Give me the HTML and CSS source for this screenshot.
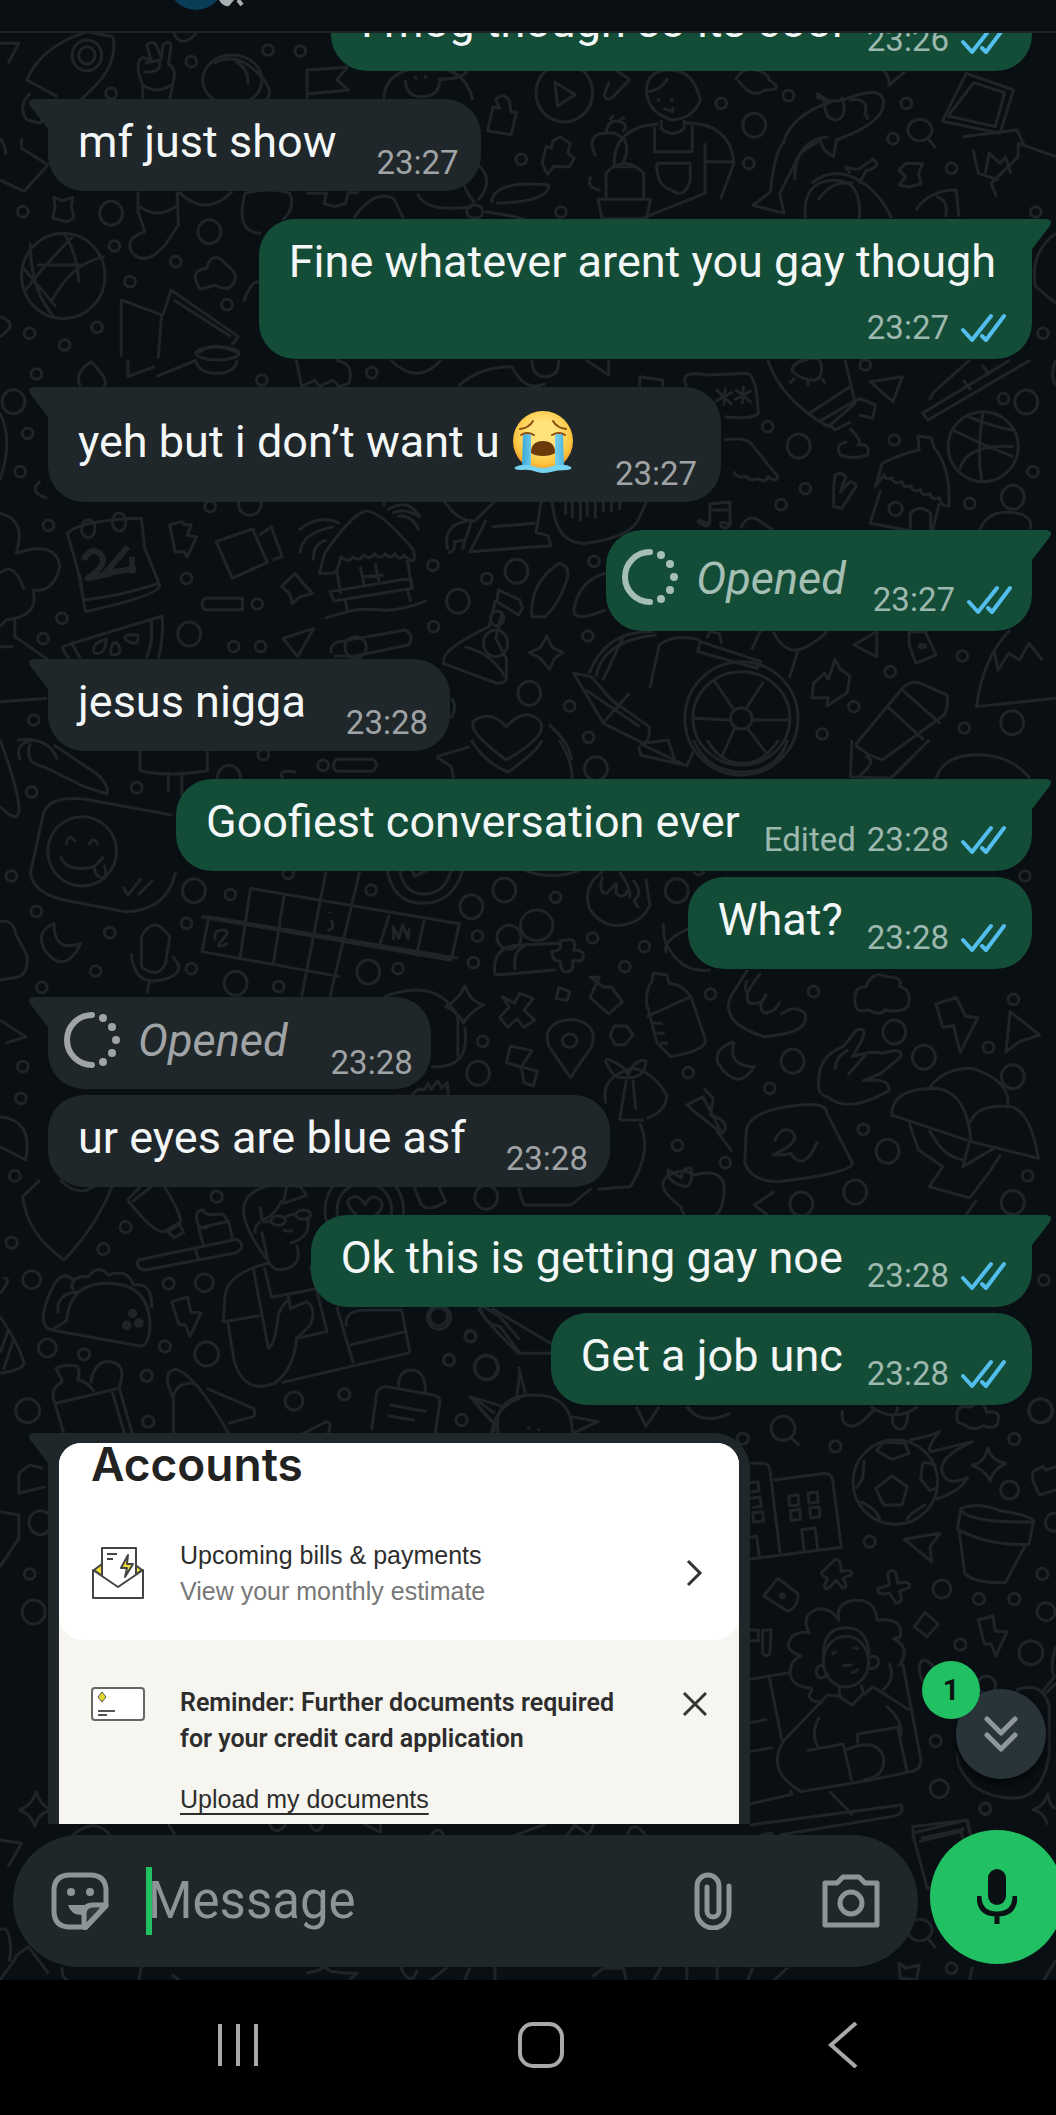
FILE: index.html
```html
<!DOCTYPE html>
<html lang="en">
<head>
<meta charset="utf-8">
<meta name="viewport" content="width=device-width, initial-scale=1">
<title>Chat</title>
<link rel="stylesheet" href="styles.css">
</head>
<body>
<svg class="defs" aria-hidden="true">
  <defs>
    <symbol id="ticks" viewBox="0 0 46 30"><path d="M3 17l9 10L31 3M22 23l4 4L44 3" fill="none" stroke="#53bdeb" stroke-width="4" stroke-linecap="round" stroke-linejoin="round"/></symbol>
    <symbol id="opened" viewBox="0 0 58 58"><path d="M30 4a25 25 0 0 0 0 50" fill="none" stroke="currentColor" stroke-width="6" stroke-linecap="round"/><g fill="currentColor"><circle cx="41" cy="7" r="4"/><circle cx="50" cy="16" r="4"/><circle cx="54" cy="29" r="4"/><circle cx="50" cy="42" r="4"/><circle cx="41" cy="51" r="4"/></g></symbol>
    <symbol id="tail" viewBox="0 0 30 32"><path d="M0 0H14Q22 1 17 8L0 30Z" fill="currentColor"/></symbol>
    <ellipse id="s" rx="8" ry="16"/><ellipse id="m" rx="17" ry="36"/>
    <circle id="c" r="17"/><circle id="d" r="27"/><circle id="e" r="36"/>
  </defs>
</svg>

<header class="topbar">
  <svg class="avatar" width="54" height="10" viewBox="0 0 54 10" aria-hidden="true"><circle cx="20" cy="-18" r="28" fill="#0b3d59"/><path d="M43 0q4 7 10 6l5-6" fill="#a9b0b3"/><path d="M62 0l4 5" stroke="#a9b0b3" stroke-width="4"/></svg>
</header>

<main class="chat">
  <svg class="wallpaper" viewBox="0 33 1056 1947" preserveAspectRatio="xMidYMin slice" aria-hidden="true">
    <g transform="scale(.6734 .3333)">
      <path d="M0 130h28l-16 60M85 290L40 240Q60 140 130 95L168 110Q175 190 140 260L120 300M45 280q-20 40-5 80l20 10 10-50"/>
      <ellipse cx="129" cy="166" rx="22" ry="46"/><ellipse cx="129" cy="166" rx="12" ry="26"/>
      <path d="M225 185L218 135q8-16 14 0l8 40 2-40q10-18 12 4l-4 54q12 10 8 45l-10 100M212 300V255Q198 190 212 172l14 10M215 190l22-10q5 40-24 36M212 255q20 30 42 0"/>
      <ellipse cx="345" cy="240" rx="44" ry="75"/><path d="M318 190q35-40 70 40t-30 90M350 185q20 20 18 70"/>
      <path d="M456 296v-86l60-8-16 38 18 30-62 12M258 99q10 50 34 0"/>
      <path d="M570 300q0-90 60-98t72 98M602 240q0 50 25 50t26-50M617 228v10M632 226v10M650 238q40 0 44-28"/>
      <ellipse cx="838" cy="278" rx="42" ry="88"/><path d="M824 246l30 38-26 34zM742 325l-6-25q10-26 20 0l3 36 8 0-8 68-35-12 8-70z"/>
      <path d="M905 245l-8 40q4 20 12 8l26-54-24-35M960 275q0-65 35-65t45 90q-10 55-42 60-35-20-38-85q20 0 32-40M976 296l4 8M995 296l5 8M985 325l14 10v-14M982 360v25q16 30 34 0v-25M978 372Q910 380 912 500h30M1018 368q66 0 72 120l-20 110M1045 485h45M972 380v75h56v-80M975 490h50v50q-8 60-28 30-22-10-22-80M1047 430v150l-95 76"/>
      <path d="M900 598V520q26-60 56 0v78M888 598h78l-6 58h-66zM885 470q-20-80 28-70 28 20 12 90M900 395q4-40 20-30t4 30M905 360l6-14M920 360l8-8M878 530q-10 30 14 42"/>
      <path d="M1092 240q10-40 30-30t20 30q25 30-6 30-20 30-40-30M1205 550q30-50 65-15t54 120M1196 656q-5-110 40-115t40 115M1215 600q20-60 52-50M1262 520l-6-20q10 10 20 6l20-28q16 20-10 34l-10 40"/>
      <path d="M1212 290q20 20 40 10 60-50 60 10 0 60-70 110l-4 50-14-20-6-30-30 40-30 120 6 60-46-24 26-40q6-120 20-150 10-80 70-120l-22-26M1250 290q10 60-8 70-18 0-18-60M1262 300q30-10 22 50 M1288 345v14M1230 410q-50 10-50 130"/>
      <path d="M1345 490l-10 20 10 20-10 25 15 6 18-10-4-30 6-30zM1435 220l70 50-20 130-86-36zM1446 248l46 30-14 102-70-32zM1430 410l80-20 12 50M1445 450l8 70 30 20M1463 520l6-60 16 30 8-20 8 50M1480 590l-8-40 40-80V430l56 40"/>
      <ellipse cx="1366" cy="390" rx="18" ry="32"/><path d="M1378 415l12 30M1312 212q10 20 8 45 10-20 24-42M1360 630q20-60 60-60l4 80M1390 590q20 10 14 60M0 415q10 30 8 50M0 540l36 34 35-80L32 445v-30"/>
      <path d="M205 575v60l10 60q-30 20-20 60 20 50 50-20l20-60-2-100M208 620q26 40 56-4M265 575q40 80 80 0M388 700q-40 0-24-120 40-20 66 0 10 40-10 80M455 580h30l-4 30 16 10 16-10 4-32h16M525 656q30-90 60-60l14 60M620 580q10 60 80 40M705 610Q670 520 700 480q40 50 10 120M730 610q0-70 85-55 2 50-78 55M720 635q40 10 60 25"/>
      <ellipse cx="705" cy="635" rx="12" ry="20"/>
      <path d="M80 592l12 10 16-10-2 30 4 30-10 14-22-12 4-30z"/><ellipse cx="94" cy="828" rx="62" ry="128"/><path d="M45 730q0 140 35 220M95 700q20 60 22 150M38 870q30-80 70-160M75 910q30-120 80-140M33 800l50 120M55 795l70 0"/>
      <path d="M295 860q-14-50 12-55 8-60 30-10 20 30 8 60-8 20-26 0-24 20-24 5zM180 1070V900l60 45-5 130M242 945l12-75 100 140-10 25M258 900l85 110M362 905q10-60 22-60M295 1060q20-40 60 0M0 950q30 20 0 60"/><ellipse cx="323" cy="1060" rx="32" ry="20"/>
      <use href="#s" x="398" y="150"/><use href="#s" x="446" y="153"/><use href="#s" x="284" y="185"/><use href="#s" x="165" y="280"/><use href="#s" x="1071" y="310"/><use href="#s" x="1171" y="287"/><use href="#s" x="1346" y="310"/><use href="#m" x="1120" y="376"/><use href="#s" x="1326" y="416"/><use href="#s" x="774" y="478"/><use href="#s" x="1112" y="490"/><use href="#s" x="1413" y="505"/><use href="#s" x="833" y="636"/><use href="#s" x="34" y="635"/><use href="#m" x="165" y="640"/><use href="#m" x="311" y="695"/><use href="#s" x="170" y="738"/><use href="#s" x="261" y="785"/><use href="#s" x="193" y="845"/><use href="#s" x="337" y="914"/><use href="#s" x="44" y="1000"/><use href="#s" x="144" y="982"/><use href="#s" x="96" y="1035"/><use href="#s" x="1549" y="1000"/><use href="#s" x="1538" y="636"/>
      <path d="M805 490l6-50 8 4 2-20 10-14 16 20-4 30 10 15-8 26-22-2-10 24zM1568 700q-40 60-30 160l30 50"/>
    </g>
    <g transform="translate(0 360) scale(.6734 .3333)">
      <path d="M120 80q-12-40 15-75 30 60 18 75M190 0v50l40-30M232 50l60-50M290 0q5 40 32 40t30-40M440 0l8 80 20-20 6 20 20-20 10 20 14-10q10-60-20-70M580 0q40 80 75 0M680 80q30-60 80-60 20 80 50 50M790 0q0 50 20 50t20-50M870 0l34 45V0M950 80v-30l34 10v20M1020 80q-14-50 30-35l60-5q14 10 16 120-10 20-50 10M1063 88l24 46M1077 82l-2 55M1088 96l-26 28M1092 88l24 40M1104 78l-2 55M1116 92l-26 28"/>
      <path d="M1140 0q20 120 90 200L1270 130 1255 0M1202 160l60-80M1216 185l60-70 24 20-4 40-20-10M1230 190l10 20 24-25M1190 5q30-30 30 20t-26 30-14-40 24-20M1200 60v20M1180 55l-8 15M1220 55l6 15M1292 65l48-15-14 75zM1500 0l-130 160 8 20L1530 0M1380 120l6-22L1440 0M1430 60l12 30M1458 15l12 30"/>
      <ellipse cx="1460" cy="260" rx="52" ry="105"/><path d="M1415 210q50 50 90 80M1460 155q-10 120-2 210M1438 170q50 40 68 40M1425 330q10-80 80-70M1568 0q-10 50 0 75M0 160q20 80 0 200"/>
      <path d="M1262 205q20 40 12 50 20-4 14 30-20 15-40 0-10-30 10-40M1240 345q10-10 16 5l-8 45 14-30q16 5 4 30l-16 50-12-5v-60zM1300 380L1310 310Q1340 280 1365 270l-2-42 20 5 4 30q25 60 22 175-12 0-14-25-12 10-14-12-12 10-14-12-12 10-14-12-12 10-14-12-12 10-14-12-12 10-12-10zM1308 390l-16 100 60 22V460q14-30 30 0v70M1395 430l-10 80"/>
      <ellipse cx="1330" cy="447" rx="10" ry="20"/><path d="M1455 512q10-60 45-55t30 50M1075 240q30-10 40 10l40 100q-2 20-14 0-4 20-16 6-12 10-16-8-14 10-20-14M1051 492q-20-20-12-2 15 20 15-10V432l30-6v70q-14-18-14 0 10 20 14-10M1054 450h28M1100 505q10-50 30-20t16 20"/>
      <path d="M660 425q20 60 45 58l30 -60M665 570q-10-80 36-90M665 575q10 10 10-30l15-5-2 25M700 485l-14 85M722 480l-24 95 120-18-4-30-18-10 8-95M730 500l65-10M820 425q5 130 50 125 70-20 80-80l10-46M840 425v40M850 425v50M862 425v60M872 425v45M884 425v50M896 425v30M908 425v30M920 425v25"/>
      <path d="M100 520q20-40 110-45l5 90 22 110q2 30-110 80l-12-130zM118 640l6 80q50-10 112-50M270 485l-18 10 8 80 14 0 4 16 14-60-14-5 6-32-10 0zM345 655l-24-110 54-38 22 100zM385 525l18-25 16 90-14 10M0 460q40 20 24 120 60-40 65 40-10 80-40 70 10 80-40 90L0 800M0 640q20-40 36 50M70 415q-30-20-10-50M22 780v50l50 70M0 860h20"/>
      <ellipse cx="131" cy="506" rx="10" ry="27"/><ellipse cx="177" cy="486" rx="10" ry="27"/><path d="M124 600q10-40 24-20 16 30-18 75l36-15M190 560l-34 80 46-14M196 590v50" stroke-width="6"/>
      <path d="M474 640L482 580Q520 470 540 455T614 570q4 40-4 30-10-10-10-15-6 20-14-4-6 20-14 0-6 20-16 0-6 20-16 5-6 20-16 5-6 20-18 0-4 45-12 49zM500 632l6 70M605 600l6 80M535 620l6 60M557 610l6 55M540 650l30-5M490 695l120-40 2 30-116 38zM512 720l4 30M605 690l5 35M482 775q30-20 46-25t40 0 66-28M446 580q0-60 50-80M444 510q30-50 60-20M465 600q0-50 20-60M570 440q0-40 15-20M575 450q30-40 48 20-24-30-40-10M590 470q20-10 32 40"/>
      <path d="M438 640l-20 40 12 20 4 30 12-20 18-10-14-30zM304 715h56v34h-56q-8-15 0-34M790 770q-4-100 40-160 20 10 10 60-10 60-30 100zM900 640q-40 20-48 110 0 40 48 0M92 860l149-92q2 70-6 128M92 860q4 20 10 36M106 845q6 30 14 50M225 780v60q-4 40-8 54M140 880q-6-30 18-42-2 50-18 42M165 885q-2-36 8-38 14 40-8 38M185 838q0-18 20-12 2 40-20 12"/>
      <path d="M466 805l-46 30 22 55zM492 880q-4-35 20-38l90-32q15 20 4 45l-80 34-30 0M740 690l32 30 4 25-6 20-12-15-20-25zM736 720l-10 80q-60 60-66 90l-2 20 80 60q14 0 14-15v-60l-16-60 10-80M690 860q40 20 60 90"/><ellipse cx="528" cy="862" rx="16" ry="32"/><ellipse cx="738" cy="775" rx="10" ry="22"/><ellipse cx="736" cy="850" rx="18" ry="40"/>
      <path d="M812 828l-10 36-16 14 16 16 14 34 8-34 12-16-16-16zM875 940Q900 810 970 815M885 950q10-110 90-125M895 960q20-80 30-130M965 985l14-130Q1000 820 1040 840M1040 845l90 60-6 20-88-50zM1050 835l4-20 14 6 4 30M852 940l44 150 60 60q10-10 8-50l-56-80-30-70zM956 1150l36-10 10 60M870 990l80 110M895 1090l40-90"/>
      <ellipse cx="1101" cy="1075" rx="84" ry="170"/><ellipse cx="1101" cy="1075" rx="72" ry="140"/><ellipse cx="1101" cy="1075" rx="16" ry="32"/><path d="M1090 1050l-30-90M1108 1045l26-80M1085 1080l-55-5M1117 1080l55 0M1092 1100l-20 90M1110 1105l30 80M1130 810l-14 60M1148 815q20 80 50 45t30-50M1186 865l-14 90"/>
      <path d="M1268 855l34-40v75zM1350 815l24 0 16 70-30 25-10-55zM1208 970l16-30 6 18 10-60 8 30 14 20-4 50-30 40 2-25-24 0zM1500 810q-40 80-50 230L1568 1015M1476 870l6 60 16-50 16 20 14-50 20 50M1270 1155l70-170q15-30 32-10l34 30q4 30-4 60L1310 1200M1340 990l56 100M1318 1040l54 100M1270 1155l20 30 20 15"/><circle cx="1370" cy="858" r="5"/>
      <path d="M752 1200Q690 1110 705 1080 730 1050 752 1100 780 1040 800 1080T752 1200M815 1095q30 50 34 105M670 1015q10 20 0 60M0 1025l70-10M25 1140q50-10 60 60M30 1200q-10-50 20-60"/>
      <use href="#s" x="54" y="42"/><use href="#m" x="20" y="125"/><use href="#s" x="389" y="60"/><use href="#s" x="552" y="38"/><use href="#s" x="1285" y="15"/><use href="#s" x="1490" y="116"/><use href="#m" x="1524" y="126"/><use href="#s" x="1140" y="200"/><use href="#m" x="1186" y="258"/><use href="#s" x="1328" y="240"/><use href="#s" x="1534" y="335"/><use href="#s" x="1196" y="386"/><use href="#s" x="1160" y="434"/><use href="#m" x="1504" y="412"/><use href="#s" x="1440" y="430"/><use href="#s" x="30" y="335"/><use href="#s" x="41" y="220"/><use href="#s" x="312" y="440"/><use href="#m" x="371" y="430"/><use href="#s" x="72" y="496"/><use href="#s" x="277" y="655"/><use href="#s" x="382" y="732"/><use href="#s" x="643" y="616"/><use href="#s" x="723" y="656"/><use href="#m" x="767" y="634"/><use href="#s" x="882" y="604"/><use href="#m" x="680" y="724"/><use href="#s" x="92" y="775"/><use href="#s" x="64" y="836"/><use href="#m" x="281" y="822"/><use href="#s" x="347" y="860"/><use href="#s" x="387" y="860"/><use href="#s" x="644" y="800"/><use href="#s" x="873" y="828"/><use href="#m" x="786" y="1000"/><use href="#s" x="846" y="1038"/><use href="#s" x="874" y="1132"/><use href="#s" x="1268" y="1040"/><use href="#s" x="1322" y="935"/><use href="#s" x="1429" y="888"/><use href="#s" x="1432" y="1104"/><use href="#m" x="1503" y="1088"/><use href="#s" x="1221" y="1122"/><use href="#s" x="50" y="1080"/>
    </g>
    <g transform="translate(0 740) scale(.6734 .3333)">
      <path d="M45 10q-10 60 20 70l60 60 34 22q4-40-30-80L80 15M208 32v60q40 20 100 0V32M250 95v60M270 95v70M500 58h54q10 15 0 36h-54q-10-15 0-36M648 50l50-30M648 50l22 30 4 36M700 0q20 70 55 96Q800 30 805 0M830 0q20 60 20 116M950 10l70 68 10-45M948 20l4 26 66 30M1030 0q20 96 72 96T1170 0M1050 0q20 70 52 70t54-70M1265 0l-2 110 60 5L1380 0M1275 110q30-50 10-60M1390 116q10-70 60-72t80 72M420 116q-10-30 20-20"/>
      <path d="M255 225l-130-48q-50-10-60 40L45 400q5 60 50 80l90 35q50 0 70-80l6-40"/><ellipse cx="122" cy="334" rx="51" ry="104"/><path d="M98 315q4-40 14-10M132 315q6-30 14 0M90 350q10 50 50 30l14-30M140 380q0 30 14 35 6-20 0-40M182 440l8 25 20-50M205 465l22-45M0 200q30 60 28 0T0 0"/>
      <path d="M372 445l310 106-12 110-370-130 10 0M310 530l-10 105 205 75M310 530l370 125M372 445l-16 215M422 465l-16 205M484 395L448 770M534 395L490 770M578 525l-14 90M630 540l-12 110M320 600q-4-30 10-30t0 30 8 10M490 515v4M492 540q6 30-6 30M584 600v-40l8 35 6-40 8 40 2-30"/>
      <path d="M575 392q10 100 54 98t58-98M594 392q6 70 36 70t40-70M612 392l4 16 18-16M780 392q40 30 80 0M895 395q-30 40-20 110 20 60 50 50t40-60l-6-80M895 410q-8 50 6 50l14-30v30q10 20 18-10M920 395q20 60 14 80M940 420q16 40 2 60l6 25M1030 395q5 20 16 0"/>
      <ellipse cx="797" cy="556" rx="24" ry="46"/><ellipse cx="756" cy="592" rx="18" ry="36"/><path d="M735 705q-6-90 40-90l56-5M735 705l90-15M765 690q-4-60 14-70M842 600q16-4 10 30 20 0 12 32l-14 0q4 36-12 34-6-10-6-32-14 0-12-30 16 0 12-30z"/>
      <path d="M82 550q-30 20-16 80 30 80 54-20-40 30-40-60M210 680V590q18-70 42 0l-6 80q-12 50-36 10M195 640q4 100 45 80t16-70M222 725l-4 35M0 545q20-10 24 40l16 60q4 70-24 70L0 720M985 550q0 60 10 80 20 70 60 60M1030 560q-50 40-40 80"/>
      <path d="M690 735q8 50 28 60-20 20-30 55-6-30-26-50 24-30 28-65M570 770q80-60 110 60v120M640 980q60 10 50-120M746 770l18 20 8-30 20 16-14 34 16 30-16 22-10-26-14 26-12-30 14-30zM830 742l16 14-4 26-16-6zM890 712l-14 60 28 50 20-36-16-45-12 0-20-30zM960 790q0-50 8-64l2-26 20 4 4 26q20 5 32 40l20 120q10 40-50 60l-20-40zM960 830l66-60M970 850h14M975 880h12M980 910h12"/>
      <path d="M1110 690l-25 80q-16 80 50 120 70-10 60-70-16-30-36 5M1110 760q-6-20 0-40M1130 700q-30 70-16 90 20 5 24-30M1138 760q-16 50 0 60 16-10 20-35M1270 790q-4-50 16-50 10-50 30-30 26 0 20 30 20 10 12 60-10 20-34 10-8 20-24 0-20 10-20-20zM1420 772l-30 20 10 70 16-5 10 80 26-104-18-4zM1500 815l-6 120 20-30 30-20zM848 838q-45 10-33 80l32 95 32-95q10-70-31-80"/><ellipse cx="846" cy="902" rx="11" ry="20"/><path d="M912 858h18l10 26-12 30h-14l-8-26zM758 918l32 14-16 50-22-14zM774 980l24 14-6 44-14-10zM1090 905q-30 20-24 65 30 90 54 10-40 0-30-75"/>
      <path d="M1216 1040q-4-90 36-120l20-50q16-10 8 30l-14 50q30-20 44-10 30-20 28 10l-30 50-26 22q40-10 38 30-60 70-90 20-16-10-14-32M1240 990q0-40 20-60M1285 945l-26 60M1108 1180q0-60 60-80 60-20 60 20l38 150q-2 30-110 55-40 0-50-55zM1150 1205q10-50 26-30 16 30-28 70 20 0 26-5 20 60 40-35M1045 1045l14 30-4 50q30 20 20 50l-10 0 22 60M1072 1180l-44-70-8-15 24-24z"/>
      <path d="M1324 1125q0-80 66-80 46 10 52 160zM1350 1150l14 80 36 50-20 60 60 34 30-80 16-50M1380 1045q20-60 64-60 60 40 52 120M1440 1150q10-60 60-50 30 10 42 155l-100-50M1380 1170q20 80 50 90M1440 1200l-10 80 50-60M900 1090q-10-80 40-105 30 10 50 80 0 50-30 70M905 985q-14-40 6-20 20 20 22 40 10-50 26-42 0 50-26 50-22 5-28-28M930 1020l-10 120M940 1020l4 90M920 1140h36M950 1150q20 80-14 190l-48 8"/>
      <path d="M0 840l38 50-30 20M0 1130q50 10 38 130L0 1220M610 1070q10-30 20-20l6-20 4 18 10-26 6 22 8-16 2 40M1025 1440q-10-10-14-40-40-60-20-90 20-30 40-5 40-20 44 30 2 80-20 105M1020 1340q-30-10-28-50 10 10 20 24 0-30 14-30 4 40-6 56M770 1345l8 50 70 0 30-50M1140 1425l-20-30 30-40M1430 1440l20-60"/>
      <use href="#s" x="391" y="44"/><use href="#s" x="480" y="76"/><use href="#m" x="340" y="112"/><use href="#s" x="203" y="143"/><use href="#m" x="885" y="86"/><use href="#s" x="47" y="156"/><use href="#s" x="17" y="408"/><use href="#s" x="428" y="400"/><use href="#m" x="288" y="452"/><use href="#s" x="342" y="464"/><use href="#s" x="551" y="450"/><use href="#m" x="749" y="450"/><use href="#s" x="54" y="514"/><use href="#s" x="825" y="472"/><use href="#m" x="1005" y="452"/><use href="#s" x="277" y="550"/><use href="#s" x="163" y="578"/><use href="#s" x="709" y="588"/><use href="#s" x="880" y="594"/><use href="#s" x="957" y="620"/><use href="#m" x="700" y="500"/><use href="#s" x="142" y="693"/><use href="#s" x="284" y="686"/><use href="#m" x="547" y="696"/><use href="#s" x="591" y="686"/><use href="#s" x="703" y="668"/><use href="#s" x="928" y="680"/><use href="#m" x="350" y="730"/><use href="#s" x="414" y="740"/><use href="#s" x="62" y="742"/><use href="#s" x="1055" y="762"/><use href="#s" x="1208" y="755"/><use href="#s" x="1505" y="778"/><use href="#m" x="1328" y="876"/><use href="#s" x="717" y="904"/><use href="#s" x="1468" y="922"/><use href="#m" x="1177" y="964"/><use href="#m" x="1372" y="952"/><use href="#s" x="1022" y="998"/><use href="#m" x="710" y="1000"/><use href="#s" x="1143" y="1045"/><use href="#m" x="1504" y="1010"/><use href="#s" x="34" y="980"/><use href="#s" x="31" y="1075"/><use href="#s" x="1282" y="1168"/><use href="#s" x="1006" y="1216"/><use href="#m" x="1318" y="1234"/><use href="#s" x="1077" y="1268"/><use href="#s" x="22" y="1308"/><use href="#m" x="1270" y="1356"/><use href="#m" x="722" y="1372"/><use href="#m" x="1190" y="1392"/><use href="#s" x="1522" y="408"/><use href="#s" x="1526" y="1308"/><use href="#m" x="1504" y="1388"/>
    </g>
    <g transform="translate(0 1180) scale(.3333)">
      <path d="M340 10Q290 140 192 240 80 160 68 50L120 0M180 0q60 60 110 10M382 60L440 0M382 60q80 100 110 95l50-30Q540 90 480 0M397 65l70-55M503 155l36-22 12 24-28 16zM597 140q-20-50 12-50 6 20 50 12 20 0 24 28M597 140q20 10 32-5M610 195l-14-50 90-22 12 55M415 240l295-62q30 20 0 40l-275 52q-30-5-20-30M585 208l12 32M798 235Q700 100 745 50T900 20l20 26-70 24 10-50M780 80q5 20 5 40 40-10 60-60M788 125l26 0M855 110l35-10M850 150q16 8 28 0M920 110q20 60-50 80M768 160q-10-20 14-35M785 155l20 90q20 40 70 15 30-20 15-65M805 250Q680 280 675 350l-5 75 110-18M683 425l20 120q30 100 120 65 60-40 67-140M760 265l45 240q20-10 30-100 10-30 30-45M793 262l22 90 130-25M865 345l6 40 50-20q30 20 10 70l-40 40 90-20-50-200M845 608l385-90M1010 380l50 170M1040 440q-10-50 60-50t105 0l25 128M1050 495l165-40"/>
      <ellipse cx="835" cy="122" rx="22" ry="14"/><ellipse cx="910" cy="104" rx="22" ry="14"/>
      <path d="M155 450q50-30 45-30 10-110 120-110 130 0 130 130-5 60-30 58L155 450Q110 440 145 350t75-50q-5 20 0 30M215 325q0-40 50-35 30-40 60-5 60-20 75 30 50-10 55 50v20M175 400q-10-60 60-65M0 410q60 90 72 140-5 20-72 30M0 520l25-70M10 570l30-90M0 340q40-50 10-45M515 365l48-14 10 45 30 3-33 70-15-35-18 0zM188 605l-20-40q30-15 65-5l5 20-5 20q30 5 50 35M188 605q-40 20-25 60l30 100M168 670l190-45 40 140M335 630l40 135M272 610q10-70 60-65t25 80M520 770V655Q480 570 530 568q60 20 160 200M518 655q10-50 65-45M620 625l140 60q10 15 0 25l-75 20M900 765l80-40q20 0 0 45M1195 620q0-50 40-50t42 65M1130 640q5-20 30-20l140 25q20 5 20 20l-15 100M1130 640l-15 110M1170 675l110 20M1162 707l82 14M1475 725l-65-75 100 30M1475 760q10-80 85-105M1550 650l10-70M1242 20l20 50q20 30 75-5l-20-45M1440 380q10 50 60 60l60 80M1450 380l50 30 60 70"/>
      <circle cx="1093" cy="90" r="82"/><circle cx="1093" cy="90" r="118"/><path d="M1095 130q-70-60-45-75 30-15 45 20 20-40 45-15t-45 70"/>
      <g class="dots"><circle cx="398" cy="400" r="10"/><circle cx="380" cy="436" r="10"/><circle cx="417" cy="429" r="10"/></g>
      <use href="#c" x="650" y="50"/><use href="#c" x="35" y="188"/><use href="#c" x="377" y="141"/><use href="#c" x="310" y="207"/><use href="#d" x="95" y="299"/><use href="#c" x="506" y="311"/><use href="#d" x="613" y="308"/><use href="#d" x="142" y="504"/><use href="#c" x="252" y="523"/><use href="#c" x="495" y="499"/><use href="#e" x="620" y="522"/><use href="#c" x="440" y="587"/><use href="#d" x="882" y="663"/><use href="#c" x="1033" y="643"/><use href="#e" x="83" y="692"/><use href="#c" x="445" y="725"/><use href="#d" x="1316" y="410"/><use href="#c" x="1411" y="468"/><use href="#c" x="1347" y="540"/><use href="#e" x="1460" y="563"/><use href="#c" x="1385" y="720"/>
    </g>
    <g transform="translate(736 1400) scale(.3333)">
      <circle cx="141" cy="85" r="36"/><path d="M165 112l25 25M320 30q-10 50 35 48 20-5 60-50M405 20q70 50 140 0M485 20l-5 25M470 45q-4 40 20 42t25-45M662 50q0-40 40-28 40-30 50 15 50-10 30 40-20 10-40 0-30 20-60-5-20 0-20-22"/>
      <circle cx="478" cy="246" r="127"/><path d="M468 228l46 32-16 55h-55l-24-50zM422 152l20-26 65 4 12 30-51 18zM560 188q30 0 40 10M560 188l-6 50 28 34 20-8M385 180l-5 55-20 30M372 305q50 20 60 55M510 362l15-20 45-30M520 120q60-10 90-25-40 50-25 60 20-5 125-30-110 50-90 95 15 40 75 13-20 40-95 65"/>
      <path d="M755 142q10 40 54 48-40 20-46 54-10-30-54-48 40-10 46-54M42 190h40q16 0 20 20l30 250M112 240l160-20q15 5 18 20l26 202-274 35M158 288l28-4 3 30-28 4zM216 280l28-4 3 30-28 4zM163 332l28-4 3 30-28 4zM221 324l28-4 3 30-28 4zM42 248l24-2 3 26-24 4M42 295l30-4 4 28-30 4M50 338l30-3 3 28-30 4zM205 453l-8-64 40-5 8 62M42 412l20-4 8 65"/>
      <path d="M675 325q50-20 120 8 80 10 98 30l-14 70q-120 5-215-45zM675 325q0 20 60 32t158 8M670 395l16 125q30 30 122 28l60-112M505 418l107-18-30 40 5 45zM295 480q20-10 20 35 40-10 30 10l-25 10q20 30 0 30l-20-25q-30 40-35 20l10-25q-30-15-10-25zM455 520q15-15 25 0l5 30q40-10 35 12l-30 12q15 35-10 35l-20-30q-40 10-33-14l33-10zM83 588l42-53 60 45q5 40-30 54zM535 680l32-42 40 34-34 38zM727 660l44-12 7 45 35 3-33 72-15-36-20 0z"/>
      <path d="M230 865Q150 860 165 800q5-20 30-32-60-20-25-60 20-15 50-10-30-55 30-72 40 0 58 35-10-55 50-60 60-5 65 60 80-10 70 50l-20 5q55 30 15 82M440 870q40-30 20-80M230 865q-30 40 30 42M262 765q0-80 66-82t72 80"/><ellipse cx="330" cy="785" rx="68" ry="76"/><path d="M265 795q-30 0-22 30 10 20 35-5M400 772q30-10 27 20-10 20-35 10M288 765q6-12 14-8M350 745q12-5 18 4M320 795q20 5 28-4M345 818q16 0 20-12M310 860v30l38 25 35-35-8-25M275 885L145 1020q-60 90 50 155L405 1140M410 860l110 70M320 890l-45-5M383 885l27-25M250 950q-30 60 0 95M212 1052l110-20 25 110M330 1050q90-40 112 20 10 60-60 70M365 1030v-28l120-20 28 133M450 918q50 40 45 90M500 790l55 290q0 30-30 35l-120 25M42 838l118-20M100 832l38 190M42 968l52-10M42 1055l68-12M42 1212l130-30M165 1170v15M280 1175l70 70M42 1275l454-60q10 30-30 35L130 1305M42 690h25v32H42M80 690h25l-3 70q-10 15-22 0zM560 845q-20-50 0-65 20 0 35 25M665 1060q-10 40 50 100 50 35 120 34Q920 1195 940 1060V920q-20-80-100-50M960 740q-20 60-5 90l-35 45M930 880l30-30"/>
      <path d="M535 1320l-5-40 165-20 10 50M555 1315l130-28M935 1180q5 40 25 45M935 1275q-10-40-45-45 35-10 45-50M890 215l30-15 10 10 30-10M890 240l20 45 50-15M890 215v30M42 1330q20-30 70-30"/>
      <circle cx="139" cy="587" r="6"/>
      <use href="#c" x="20" y="116"/><use href="#c" x="298" y="139"/><use href="#e" x="914" y="32"/><use href="#c" x="835" y="117"/><use href="#d" x="821" y="270"/><use href="#c" x="401" y="425"/><use href="#d" x="955" y="367"/><use href="#c" x="919" y="522"/><use href="#d" x="618" y="567"/><use href="#c" x="729" y="597"/><use href="#c" x="835" y="597"/><use href="#d" x="930" y="635"/><use href="#c" x="673" y="734"/><use href="#e" x="885" y="758"/><use href="#d" x="752" y="855"/><use href="#c" x="599" y="1023"/><use href="#d" x="610" y="1166"/><use href="#c" x="748" y="1227"/>
    </g>
    <g transform="translate(0 1200) scale(.6734 .3333)">
      <path d="M710 325q20 60 60 135h50M730 325l100 120M770 500l10 80M700 590l35 50M698 590l40 90q-8 20-8 20M740 700q-10-110 50-115t60 115l38-35-40-15M785 680v8M800 685v8M945 620l14 60 20-60M1020 620q20 60 64 20M28 820l16-25 20 10M28 820v60l40-20M0 935l28 10v70L0 1100"/>
      <use href="#m" x="652" y="352"/><use href="#s" x="699" y="410"/><use href="#s" x="667" y="480"/><use href="#m" x="722" y="502"/><use href="#m" x="1545" y="632"/><use href="#s" x="1550" y="240"/><use href="#s" x="44" y="1122"/><use href="#m" x="60" y="968"/><use href="#m" x="50" y="1236"/>
    </g>
    <g transform="translate(0 1800) scale(.6734 .3333)">
      <path d="M28 30q18-10 26-55 5 40 22 55-20 10-24 50-6-40-24-50M100 120q40-80 65-10M250 72l12 40M400 72q10 40 25 0M460 72q10 40 20 0M540 72l25 25v-25M640 110q10-40 20 0M760 110l50-38M840 110l14-35 20 30 8-33M930 110q10-60 30 0M1355 100l80-40 14 100M1355 100l22 165 20-10M1365 125l62-30 10 80M0 120l32 10-20 70M0 390q14-20 16 60l-2 35M22 470l20-30 30 80M0 540l25-70M92 500q0 40 10 40M210 500l-4 40M255 525l12 15M455 520l20-10 6-10 10 14 20 5 20 0-12 20M595 500q10 50 20 30l5-20M640 540l24-38M690 540l8-38M735 500v40M880 530l16-25 30 0 4 35M970 540l12-38M1020 500v40M1065 500v40M1110 540l8-38M1150 540l20-38M1335 490l10 15 20-10-4 45-24-5zM1440 540l4-40M1550 540l18-60"/><ellipse cx="1366" cy="390" rx="18" ry="32"/><path d="M1378 415l12 30"/><use href="#s" x="1413" y="505"/><use href="#s" x="1463" y="25"/>
    </g>
  </svg>

  <section class="log" aria-label="Messages">
    <article class="msg out start"><p>I mog though so its cool</p><span class="meta"><time>23:26</time><svg class="ticks"><use href="#ticks"/></svg></span></article>
    <article class="msg in start"><svg class="tail"><use href="#tail"/></svg><p>mf just show</p><span class="meta"><time>23:27</time></span></article>
    <article class="msg out start stacked"><svg class="tail"><use href="#tail"/></svg><p>Fine whatever arent you gay though</p><span class="meta"><time>23:27</time><svg class="ticks"><use href="#ticks"/></svg></span></article>
    <article class="msg in start emoji"><svg class="tail"><use href="#tail"/></svg><p>yeh but i don’t want u <svg class="cry" viewBox="0 0 64 64" role="img" aria-label="loudly crying face">
      <defs><radialGradient id="face" cx=".5" cy=".4" r=".6"><stop offset=".4" stop-color="#ffe27a"/><stop offset=".8" stop-color="#fdc53e"/><stop offset="1" stop-color="#ee8f22"/></radialGradient><linearGradient id="tear" x1="0" x2="1"><stop offset="0" stop-color="#35a9d6"/><stop offset=".5" stop-color="#b5effc"/><stop offset="1" stop-color="#4bb8df"/></linearGradient></defs>
      <circle cx="32" cy="31" r="30" fill="url(#face)"/>
      <path d="M20 43q0-12 12-12t12 12q-4 3-12 3t-12-3z" fill="#6b3a0b"/>
      <path d="M9 19q9-1 13-8M55 19q-9-1-13-8M10 25q6-4 13 0M41 25q7-4 13 0" fill="none" stroke="#8a4d12" stroke-width="2" stroke-linecap="round"/>
      <path d="M12 25q5-2 8 0v31h-9zM44 25q4-2 8 0l1 31h-9z" fill="url(#tear)"/>
      <path d="M4 57q8-4 18-1 10 4 20 0 12-3 18 1 2 2-4 3-10 0-16 2-8 2-14 0-8-3-16-2-8 0-6-3z" fill="#74d3f0"/></svg></p><span class="meta"><time>23:27</time></span></article>
    <article class="msg out start opened"><svg class="tail"><use href="#tail"/></svg><svg class="ring"><use href="#opened"/></svg><p>Opened</p><span class="meta"><time>23:27</time><svg class="ticks"><use href="#ticks"/></svg></span></article>
    <article class="msg in start"><svg class="tail"><use href="#tail"/></svg><p>jesus nigga</p><span class="meta"><time>23:28</time></span></article>
    <article class="msg out start"><svg class="tail"><use href="#tail"/></svg><p>Goofiest conversation ever</p><span class="meta"><span>Edited</span><time>23:28</time><svg class="ticks"><use href="#ticks"/></svg></span></article>
    <article class="msg out"><p>What?</p><span class="meta"><time>23:28</time><svg class="ticks"><use href="#ticks"/></svg></span></article>
    <article class="msg in start opened"><svg class="tail"><use href="#tail"/></svg><svg class="ring"><use href="#opened"/></svg><p>Opened</p><span class="meta"><time>23:28</time></span></article>
    <article class="msg in"><p>ur eyes are blue asf</p><span class="meta"><time>23:28</time></span></article>
    <article class="msg out start"><svg class="tail"><use href="#tail"/></svg><p>Ok this is getting gay noe</p><span class="meta"><time>23:28</time><svg class="ticks"><use href="#ticks"/></svg></span></article>
    <article class="msg out"><p>Get a job unc</p><span class="meta"><time>23:28</time><svg class="ticks"><use href="#ticks"/></svg></span></article>
    <article class="msg in start photo"><svg class="tail"><use href="#tail"/></svg>
      <div class="shot">
        <div class="accounts">
          <h2>Accounts</h2>
          <div class="row">
            <svg width="54" height="54" viewBox="0 0 54 54" fill="none" stroke="#444" stroke-width="2" stroke-linejoin="round"><path d="M3 24l8-6v12zM51 24l-8-6v12z" fill="#f2dd3d"/><path d="M11 30V2h34v28" fill="#fff"/><path d="M2 24v28h50V24L27 41z" fill="#fff"/><path d="M16 8h10M16 13h6"/><path d="M37 9l-7 13h6l-2 9 8-13h-6z" fill="#f2dd3d"/></svg>
            <div class="copy"><p>Upcoming bills &amp; payments</p><p class="muted">View your monthly estimate</p></div>
            <svg width="30" height="30" viewBox="0 0 30 30" fill="none" stroke="#333" stroke-width="3"><path d="M11 3l12 12-12 12"/></svg>
          </div>
        </div>
        <div class="row reminder">
          <svg width="54" height="38" viewBox="0 0 54 38"><rect x="1" y="3" width="52" height="32" rx="3" fill="#fff" stroke="#666" stroke-width="2"/><path d="M11 7l4 5-4 5-4-5z" fill="#e5d62f" stroke="#555"/><path d="M7 26h17M7 30h9" stroke="#555" stroke-width="2"/></svg>
          <div class="copy"><p class="strong">Reminder: Further documents required for your credit card application</p><a href="#documents">Upload my documents</a></div>
          <svg width="30" height="38" viewBox="0 0 30 38" fill="none" stroke="#333" stroke-width="3"><path d="M7 8l22 22M29 8L7 30"/></svg>
        </div>
      </div>
    </article>
  </section>

  <button class="jump" type="button" aria-label="Scroll to latest"><svg width="36" height="38" viewBox="0 0 36 38" fill="none" stroke="#8d979d" stroke-width="5" stroke-linecap="round" stroke-linejoin="round"><path d="M4 4l14 14L32 4M4 20l14 14 14-14"/></svg><span class="badge">1</span></button>

  <form class="composer">
    <div class="field">
      <button type="button" aria-label="Stickers"><svg width="58" height="58" viewBox="0 0 58 58" fill="none" stroke="currentColor" stroke-width="5" stroke-linejoin="round"><path d="M19 3h20q16 0 16 16v15L35 55H19Q3 55 3 39V19Q3 3 19 3z"/><path d="M33 55V42q0-9 9-9h13L34 56z" fill="currentColor" fill-opacity=".15"/><g fill="currentColor" stroke="none"><circle cx="20" cy="20" r="4"/><circle cx="39" cy="20" r="4"/><path d="M17 33h21q-7 3-7 10-11 0-14-10z"/></g></svg></button>
      <input type="text" aria-label="Message" placeholder="Message">
      <button type="button" aria-label="Attach"><svg width="38" height="58" viewBox="0 0 38 58" fill="none" stroke="currentColor" stroke-width="5" stroke-linecap="round"><path d="M35 14v26a16 16 0 0 1-32 0V14a11 11 0 0 1 22 0v25a6 6 0 0 1-12 0V15"/></svg></button>
      <button type="button" aria-label="Camera"><svg width="58" height="54" viewBox="0 0 58 54" fill="none" stroke="currentColor" stroke-width="5" stroke-linejoin="round"><path d="M3 9h12l6-6h16l6 6h12v42H3z"/><circle cx="29" cy="29" r="11"/></svg></button>
    </div>
    <button class="mic" type="button" aria-label="Record voice message"><svg width="40" height="56" viewBox="0 0 40 56"><rect x="11" y="0" width="18" height="36" rx="9" fill="#0b1014"/><path d="M2 27q0 18 18 18t18-18M20 45v10" fill="none" stroke="#0b1014" stroke-width="5"/></svg></button>
  </form>
</main>

<nav class="system" aria-label="System">
  <button type="button" aria-label="Recents"><svg width="46" height="46" viewBox="0 0 46 46" stroke="currentColor" stroke-width="4"><path d="M5 2v42M23 2v42M41 2v42"/></svg></button>
  <button type="button" aria-label="Home"><svg width="46" height="46" viewBox="0 0 46 46" fill="none" stroke="currentColor" stroke-width="4"><rect x="2" y="2" width="42" height="42" rx="13"/></svg></button>
  <button type="button" aria-label="Back"><svg width="46" height="46" viewBox="0 0 46 46" fill="none" stroke="currentColor" stroke-width="4"><path d="M36 1L11 23l25 22"/></svg></button>
</nav>
</body>
</html>
```
FILE: styles.css
```css
* { box-sizing: border-box; }

body {
  margin: 0;
  height: 100vh;
  display: flex;
  flex-direction: column;
  overflow: hidden;
  background: #0a0f13;
  color: #f4f7f8;
  font-family: Roboto, "Liberation Sans", sans-serif;
}

p, h2 { margin: 0; }

button {
  padding: 0;
  border: 0;
  background: none;
  color: inherit;
  font: inherit;
  display: grid;
  place-items: center;
}

.defs { position: absolute; width: 0; height: 0; }

.topbar {
  flex: none;
  height: 33px;
  padding-left: 176px;
  border-bottom: 2px solid #1d2225;
}

.avatar { display: block; overflow: visible; }

.chat {
  position: relative;
  flex: 1;
  min-height: 0;
  display: flex;
  flex-direction: column;
  overflow: hidden;
}

.wallpaper {
  position: absolute;
  inset: 0;
  width: 100%;
  height: 100%;
  fill: none;
  stroke: #1f2428;
  stroke-width: 3;
  stroke-linejoin: round;
}
.wallpaper *, .defs ellipse, .defs circle { vector-effect: non-scaling-stroke; }
.wallpaper .dots { fill: #1f2428; }

.log {
  position: relative;
  flex: 1;
  min-height: 0;
  overflow: hidden;
  display: flex;
  flex-direction: column;
  padding: 0 24px 0 48px;
}

.msg {
  position: relative;
  flex: none;
  display: flex;
  align-items: flex-start;
  margin-top: 6px;
  padding: 17px 26px 14px 30px;
  border-radius: 36px;
  font-size: 45px;
  line-height: 52px;
}
.msg.start { margin-top: 28px; }
.msg:first-child { margin-top: -54px; }
.msg p { padding-bottom: 9px; }

.in { align-self: flex-start; padding-right: 22px; background: #20272a; color: #f4f7f8; }
.in.start { border-top-left-radius: 0; }
.out { align-self: flex-end; background: #144d37; }
.out.start { border-top-right-radius: 0; }

.tail { position: absolute; top: 0; left: 100%; width: 30px; height: 32px; color: #144d37; }
.in .tail { left: auto; right: 100%; color: #20272a; transform: scaleX(-1); }

.meta {
  display: flex;
  align-items: center;
  align-self: flex-end;
  gap: 11px;
  margin: 0 0 -1px 24px;
  font-size: 33px;
  line-height: 36px;
  color: #9db8ae;
}
.in .meta { margin: 0 0 -4px 40px; color: #9fa3a5; }
.ticks { width: 46px; height: 30px; }

.msg.stacked { flex-direction: column; padding-right: 36px; }
.msg.stacked p { padding-bottom: 22px; }
.stacked .meta { margin-right: -10px; }

.msg.emoji { padding-right: 24px; }
.msg.emoji p { padding: 12px 0 20px; }
.cry { width: 64px; height: 64px; margin: -16px 0; vertical-align: -1px; }

.msg.opened { padding: 18px 20px 14px 14px; }
.opened .ring { width: 58px; height: 58px; margin-right: 18px; color: #a5bfb5; }
.opened p { font-style: italic; color: #a5bfb5; }
.opened.out .meta { margin-left: 27px; }
.msg.opened.in { padding: 14px 18px 12px 14px; }
.opened.in .meta { margin-left: 43px; }
.opened.in .ring, .opened.in p { color: #a0a4a6; }
.msg.opened.out p { padding: 5px 0 12px; }
.msg.opened.in p { padding: 4px 0 10px; }

.msg.photo { display: block; width: 702px; height: 760px; padding: 10px 11px 0; }
.shot {
  height: 740px;
  border-radius: 22px;
  overflow: hidden;
  background: #f6f5f0;
  color: #2d2d2d;
  font: 25px/36px "Liberation Sans", sans-serif;
}
.accounts { height: 197px; padding: 0 32px; background: #fff; border-radius: 0 0 24px 24px; }
.accounts h2 { font-family: Inter, sans-serif; font-size: 46px; line-height: 42px; font-weight: 600; color: #222; }
.row { display: flex; align-items: center; padding-top: 52px; }
.row svg { flex: none; }
.copy { flex: 1; margin-left: 35px; }
.shot .copy p { padding: 0; }
.muted { color: #777; }
.reminder { align-items: flex-start; padding: 45px 32px 0; }
.shot .copy .strong { padding-right: 40px; font-family: Roboto, sans-serif; font-weight: 600; }
.copy a { display: inline-block; margin-top: 24px; color: inherit; text-underline-offset: 5px; }

.jump {
  position: absolute;
  right: 10px;
  bottom: 201px;
  width: 90px;
  height: 90px;
  border-radius: 50%;
  background: #29343a;
  box-shadow: 0 6px 8px #05080a;
}
.badge {
  position: absolute;
  left: -34px;
  top: -28px;
  width: 58px;
  height: 58px;
  border-radius: 50%;
  background: #21c063;
  color: #0a1410;
  font-size: 29px;
  font-weight: 700;
  line-height: 58px;
}

.composer {
  position: relative;
  flex: none;
  display: flex;
  align-items: center;
  gap: 12px;
  height: 156px;
  padding: 6px 0 8px 13px;
}
.field {
  flex: 1;
  min-width: 0;
  height: 132px;
  display: flex;
  align-items: center;
  padding: 0 38px;
  border-radius: 66px;
  background: #20272a;
  color: #8d9598;
}
.field input {
  flex: 1;
  min-width: 0;
  height: 68px;
  margin: 0 42px 0 37px;
  padding: 0;
  border: 0;
  border-left: 6px solid #21c063;
  outline: 0;
  background: none;
  color: #f4f7f8;
  font: 51px/68px Roboto, sans-serif;
  text-indent: -4px;
}
.field input::placeholder { color: #8d9598; opacity: 1; }
.field button + button { margin-left: 90px; }
.mic {
  flex: none;
  width: 134px;
  height: 134px;
  margin: 0 -8px 8px 0;
  border-radius: 50%;
  background: #21c063;
}

.system {
  flex: none;
  height: 135px;
  display: flex;
  justify-content: space-between;
  align-items: center;
  padding: 0 190px 6px 215px;
  background: #000;
  color: #a9a9a9;
}
```
